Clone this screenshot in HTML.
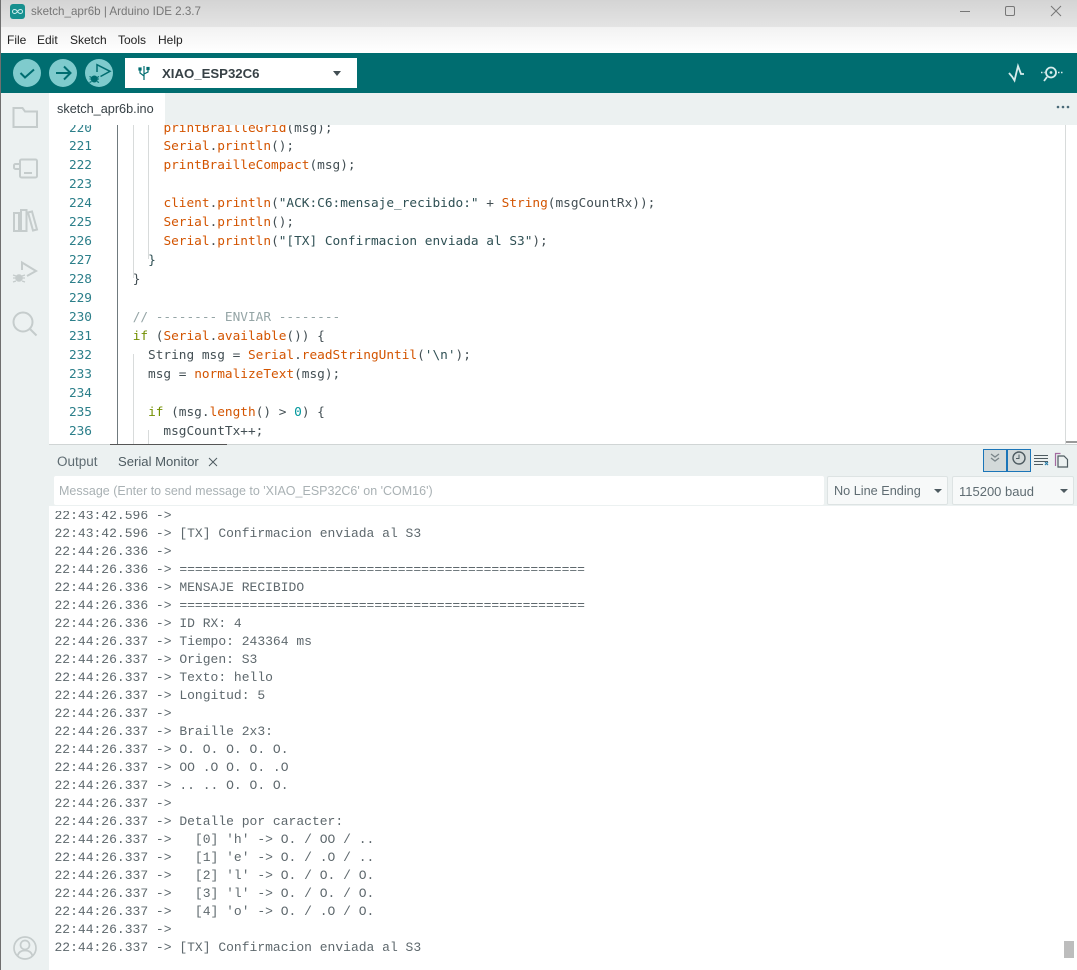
<!DOCTYPE html>
<html><head><meta charset="utf-8"><style>
html,body{margin:0;padding:0;width:1077px;height:970px;overflow:hidden;background:#fff}
body{position:relative;font-family:"Liberation Sans",sans-serif;color:#4e5b61}
.a{position:absolute}
.ui{font-size:12.5px;white-space:pre}
#code{left:0;top:125px;width:1065px;height:319px;overflow:hidden}
.l{position:absolute;left:132.7px;height:19px;font:12.78px/19px "DejaVu Sans Mono",monospace;white-space:pre;color:#434f54;margin-top:1px}
.n{position:absolute;left:49px;width:43px;text-align:right;font:12.78px/19px "DejaVu Sans Mono",monospace;color:#2c7f8a;margin-top:1px}
.o{color:#d35400}.g{color:#728e00}.s{color:#2f5054}.c{color:#95a5a6}.t{color:#00979c}
#mon{left:49px;top:506px;width:1028px;height:464px;overflow:hidden;background:#fff}
.m{position:absolute;left:5.5px;font:13px/18px "Liberation Mono",monospace;white-space:pre;color:#5e686d;margin-top:1px}
</style></head><body>
<div class="a" style="left:0;top:0;width:1077px;height:27px;background:linear-gradient(#d4d4d4,#e4e4e4)"></div>
<div class="a" style="left:0;top:27px;width:1077px;height:26px;background:linear-gradient(#f2f2f2,#fff)"></div>
<svg class="a" style="left:10px;top:4px" width="15" height="15"><rect width="15" height="15" rx="3" fill="#17908f"/><path d="M7.5 7.5c-1-1.6-2-2-3-2a2 2 0 0 0 0 4c1 0 2-.4 3-2s2-2 3-2a2 2 0 0 1 0 4c-1 0-2-.4-3-2z" fill="none" stroke="#cfeeee" stroke-width="1"/></svg>
<div class="a ui" style="left:31px;top:4px;line-height:16px;font-size:11.6px;color:#767676">sketch_apr6b | Arduino IDE 2.3.7</div>
<svg class="a" style="left:950px;top:0" width="127" height="27" fill="none" stroke="#777" stroke-width="1"><path d="M10 11.5h10"/><rect x="55.5" y="6.5" width="9" height="9" rx="1.5"/><path d="M101 6l10 10M111 6l-10 10"/></svg>
<div class="a ui" style="left:7px;top:33px;line-height:14px;font-size:12px;color:#222">File</div>
<div class="a ui" style="left:37px;top:33px;line-height:14px;font-size:12px;color:#222">Edit</div>
<div class="a ui" style="left:70px;top:33px;line-height:14px;font-size:12px;color:#222">Sketch</div>
<div class="a ui" style="left:118px;top:33px;line-height:14px;font-size:12px;color:#222">Tools</div>
<div class="a ui" style="left:158px;top:33px;line-height:14px;font-size:12px;color:#222">Help</div>
<div class="a" style="left:0;top:53px;width:1077px;height:40px;background:#006d70"></div>
<svg class="a" style="left:13px;top:59px" width="100" height="28"><g fill="#7fcbcd"><circle cx="14" cy="14" r="14"/><circle cx="50" cy="14" r="14"/><circle cx="86" cy="14" r="14"/></g><g fill="none" stroke="#006d70" stroke-width="2"><path d="M7.5 14l4.5 4.5 9-8"/><path d="M43 14h14M51 7.5l6.500 6.500-6.500 6.500"/><path d="M84 13V5.700L97 12.300 87.500 17.500" stroke-width="1.500"/><circle cx="81.300" cy="20" r="3" fill="#006d70" stroke-width="1"/><path d="M76.500 17.500l2 1M76.500 20h2M76.500 23.500l2-1M86 17.500l-2 1M86 20h-2M86 23.500l-2-1" stroke-width="1"/></g></svg>
<div class="a" style="left:125px;top:58px;width:232px;height:30px;background:#fff"></div>
<svg class="a" style="left:137px;top:65px" width="14" height="16" fill="none" stroke="#006d70" stroke-width="1.200"><path d="M7 1v14M7 11L3 8V5M7 9l4-2V4"/><rect x="2" y="3" width="2" height="2" fill="#006d70"/><rect x="10" y="2.500" width="2" height="2" fill="#006d70"/></svg>
<div class="a ui" style="left:162px;top:65px;line-height:17px;font-size:13.2px;font-weight:bold;color:#374146">XIAO_ESP32C6</div>
<div class="a" style="left:333px;top:71px;border:4px solid transparent;border-top:5px solid #434f54;border-bottom:0"></div>
<svg class="a" style="left:1007px;top:62px" width="60" height="22" fill="none" stroke="#d7ecec" stroke-width="1.800"><path d="M2 11l3 3.500 2.500 4L11 4l3 8h3"/><circle cx="44" cy="10.500" r="5"/><circle cx="44" cy="10.500" r="1.400" fill="#d7ecec" stroke="none"/><path d="M40 15l-3 4" /><path d="M34 10.500h1.500M36.800 10.500h.8M51 10.500h1.500M54 10.500h1.500" stroke-width="1.400"/></svg>
<div class="a" style="left:0;top:93px;width:49px;height:877px;background:#ecf1f1"></div>
<div class="a" style="left:0;top:0;width:1px;height:970px;background:#6f6f6f"></div>
<div class="a" style="left:49px;top:93px;width:1028px;height:32px;background:#ecf1f1"></div>
<div class="a" style="left:49px;top:93px;width:116px;height:32px;background:#fff"></div>
<div class="a ui" style="left:57px;top:101px;line-height:16px;font-size:12.7px;color:#374146">sketch_apr6b.ino</div>
<svg class="a" style="left:1056px;top:105px" width="15" height="4"><g fill="#4a6a78"><circle cx="2" cy="2" r="1.300"/><circle cx="7" cy="2" r="1.300"/><circle cx="12" cy="2" r="1.300"/></g></svg>
<svg class="a" style="left:10px;top:100px" width="32" height="240" fill="none" stroke="#c5cccc" stroke-width="2"><path d="M3.500 8h9l2.500 3.500h12V27H3.500z"/><path d="M10 64v-3a1.500 1.500 0 0 1 1.500-1.500h14a1.500 1.500 0 0 1 1.500 1.500v15a1.500 1.500 0 0 1-1.500 1.500h-14a1.500 1.500 0 0 1-1.500-1.500V69M4 65.500a1.500 1.500 0 0 1 1.500-1.500H10v5H5.500A1.500 1.500 0 0 1 4 67.500zM14 73h8"/><path d="M4 113h5v18H4zM11 110h5.500v21H11zM18 112.500l4-1 5 18-4 1z"/><path d="M12 170v-7.500L26 171l-9 5"/><circle cx="9" cy="178" r="3.800" fill="#c5cccc" stroke="none"/><path d="M3 175l3 1M3 178h3M3 182l3-1M15 175l-3 1M15 178h-3M15 182l-3-1" stroke-width="1.300"/><circle cx="13" cy="222" r="9.500"/><path d="M20 229l6.500 6.500"/></svg>
<svg class="a" style="left:12px;top:935px" width="26" height="26" fill="none" stroke="#c5cccc" stroke-width="1.700"><circle cx="13" cy="13" r="11"/><circle cx="13" cy="10" r="4.500"/><path d="M5.500 21c1-4 4-5.500 7.500-5.500s6.500 1.500 7.500 5.500"/></svg>
<div class="a" id="code">
<div class="a" style="left:117px;top:0;width:1px;height:319px;background:#707a7e"></div>
<div class="a" style="left:133px;top:0;width:1px;height:153px;background:#d8dbdb"></div>
<div class="a" style="left:148px;top:0;width:1px;height:134px;background:#d8dbdb"></div>
<div class="a" style="left:133px;top:229px;width:1px;height:90px;background:#d8dbdb"></div>
<div class="a" style="left:148px;top:305px;width:1px;height:14px;background:#d8dbdb"></div>
<div class="n" style="top:-7px">220</div><div class="n" style="top:11px">221</div><div class="n" style="top:30px">222</div><div class="n" style="top:49px">223</div><div class="n" style="top:68px">224</div><div class="n" style="top:87px">225</div><div class="n" style="top:106px">226</div><div class="n" style="top:125px">227</div><div class="n" style="top:144px">228</div><div class="n" style="top:163px">229</div><div class="n" style="top:182px">230</div><div class="n" style="top:201px">231</div><div class="n" style="top:220px">232</div><div class="n" style="top:239px">233</div><div class="n" style="top:258px">234</div><div class="n" style="top:277px">235</div><div class="n" style="top:296px">236</div>
<div class="l" style="top:-7px">    <span class="o">printBrailleGrid</span>(msg);</div>
<div class="l" style="top:11px">    <span class="o">Serial</span>.<span class="o">println</span>();</div>
<div class="l" style="top:30px">    <span class="o">printBrailleCompact</span>(msg);</div>
<div class="l" style="top:68px">    <span class="o">client</span>.<span class="o">println</span>(<span class="s">"ACK:C6:mensaje_recibido:"</span> + <span class="o">String</span>(msgCountRx));</div>
<div class="l" style="top:87px">    <span class="o">Serial</span>.<span class="o">println</span>();</div>
<div class="l" style="top:106px">    <span class="o">Serial</span>.<span class="o">println</span>(<span class="s">"[TX] Confirmacion enviada al S3"</span>);</div>
<div class="l" style="top:125px">  <span class="s">}</span></div>
<div class="l" style="top:144px">}</div>
<div class="l c" style="top:182px;color:#95a5a6">// -------- ENVIAR --------</div>
<div class="l" style="top:201px"><span class="g">if</span> (<span class="o">Serial</span>.<span class="o">available</span>()) {</div>
<div class="l" style="top:220px">  String msg = <span class="o">Serial</span>.<span class="o">readStringUntil</span>(<span class="s">'\n'</span>);</div>
<div class="l" style="top:239px">  msg = <span class="o">normalizeText</span>(msg);</div>
<div class="l" style="top:277px">  <span class="g">if</span> (msg.<span class="o">length</span>() &gt; <span class="t">0</span>) {</div>
<div class="l" style="top:296px">    msgCountTx++;</div>
</div>
<div class="a" style="left:1065px;top:125px;width:1px;height:319px;background:#d8dbdb"></div>
<div class="a" style="left:49px;top:444px;width:1028px;height:62px;background:#ecf1f1;border-top:1px solid #d0d5d5;box-sizing:border-box"></div>
<div class="a" style="left:110px;top:444px;width:117px;height:1px;background:#555"></div>
<div class="a" style="left:1066px;top:441px;width:11px;height:2px;background:#9a9a9a"></div>
<div class="a ui" style="left:57px;top:454px;line-height:15px;font-size:13.5px;color:#5f6c72">Output</div>
<div class="a ui" style="left:118px;top:454px;line-height:15px;font-size:13.1px;color:#4e5b61">Serial Monitor</div>
<svg class="a" style="left:208px;top:457px" width="10" height="10" stroke="#4e5b61" fill="none"><path d="M1 1l8 8M9 1l-8 8"/></svg>
<svg class="a" style="left:983px;top:449px" width="90" height="24" fill="none"><rect x=".5" y=".5" width="23" height="22" fill="#d3d9d9" stroke="#1b75b8"/><rect x="24.500" y=".5" width="23" height="22" fill="#d3d9d9" stroke="#1b75b8"/><path d="M24 0v23" stroke="#1b75b8" stroke-width="1.500"/><path d="M8 5l4 3 4-3M8 9l4 3 4-3" stroke="#7a8589" stroke-width="1.300"/><circle cx="36" cy="9" r="6" stroke="#4e5b61" stroke-width="1.400"/><path d="M36 5.500V9.500h-3" stroke="#4e5b61"/><path d="M51 6.500h14M51 9.500h14M51 12.500h14M51 15.500h9" stroke="#4e5b61"/><path d="M62 13l3 3M65 13l-3 3" stroke="#2a7ea8" stroke-width="1.200"/><path d="M72.500 17V4.500h5" stroke="#a36aa0" stroke-width="1.200"/><path d="M75 7h6l3.500 3.500V18H75z" stroke="#4e5b61" stroke-width="1.200"/></svg>
<div class="a" style="left:54px;top:476px;width:770px;height:29px;background:#fff;border-radius:2px"></div>
<div class="a ui" style="left:59px;top:484px;line-height:15px;font-size:12.5px;color:#a9b1b4">Message (Enter to send message to 'XIAO_ESP32C6' on 'COM16')</div>
<div class="a" style="left:827px;top:476px;width:121px;height:29px;background:#f7f9f9;border:1px solid #dde3e3;box-sizing:border-box;border-radius:2px"></div>
<div class="a" style="left:952px;top:476px;width:122px;height:29px;background:#f7f9f9;border:1px solid #dde3e3;box-sizing:border-box;border-radius:2px"></div>
<div class="a ui" style="left:834px;top:484px;line-height:15px;font-size:12.7px;color:#5f6c72">No Line Ending</div>
<div class="a ui" style="left:959px;top:484px;line-height:15px;font-size:13px;color:#5f6c72">115200 baud</div>
<div class="a" style="left:934px;top:489px;border:4px solid transparent;border-top:4px solid #4e5b61;border-bottom:0"></div>
<div class="a" style="left:1060px;top:489px;border:4px solid transparent;border-top:4px solid #4e5b61;border-bottom:0"></div>
<div class="a" id="mon">
<div class="m" style="top:0px">22:43:42.596 -&gt; </div>
<div class="m" style="top:18px">22:43:42.596 -&gt; [TX] Confirmacion enviada al S3</div>
<div class="m" style="top:36px">22:44:26.336 -&gt; </div>
<div class="m" style="top:54px">22:44:26.336 -&gt; ====================================================</div>
<div class="m" style="top:72px">22:44:26.336 -&gt; MENSAJE RECIBIDO</div>
<div class="m" style="top:90px">22:44:26.336 -&gt; ====================================================</div>
<div class="m" style="top:108px">22:44:26.336 -&gt; ID RX: 4</div>
<div class="m" style="top:126px">22:44:26.337 -&gt; Tiempo: 243364 ms</div>
<div class="m" style="top:144px">22:44:26.337 -&gt; Origen: S3</div>
<div class="m" style="top:162px">22:44:26.337 -&gt; Texto: hello</div>
<div class="m" style="top:180px">22:44:26.337 -&gt; Longitud: 5</div>
<div class="m" style="top:198px">22:44:26.337 -&gt; </div>
<div class="m" style="top:216px">22:44:26.337 -&gt; Braille 2x3:</div>
<div class="m" style="top:234px">22:44:26.337 -&gt; O. O. O. O. O.</div>
<div class="m" style="top:252px">22:44:26.337 -&gt; OO .O O. O. .O</div>
<div class="m" style="top:270px">22:44:26.337 -&gt; .. .. O. O. O.</div>
<div class="m" style="top:288px">22:44:26.337 -&gt; </div>
<div class="m" style="top:306px">22:44:26.337 -&gt; Detalle por caracter:</div>
<div class="m" style="top:324px">22:44:26.337 -&gt;   [0] 'h' -&gt; O. / OO / ..</div>
<div class="m" style="top:342px">22:44:26.337 -&gt;   [1] 'e' -&gt; O. / .O / ..</div>
<div class="m" style="top:360px">22:44:26.337 -&gt;   [2] 'l' -&gt; O. / O. / O.</div>
<div class="m" style="top:378px">22:44:26.337 -&gt;   [3] 'l' -&gt; O. / O. / O.</div>
<div class="m" style="top:396px">22:44:26.337 -&gt;   [4] 'o' -&gt; O. / .O / O.</div>
<div class="m" style="top:414px">22:44:26.337 -&gt; </div>
<div class="m" style="top:432px">22:44:26.337 -&gt; [TX] Confirmacion enviada al S3</div>
<div class="a" style="left:0;top:0;width:1028px;height:5px;background:#fff"></div>
</div>
<div class="a" style="left:1064px;top:941px;width:10px;height:17px;background:#bdbdbd"></div>
</body></html>
